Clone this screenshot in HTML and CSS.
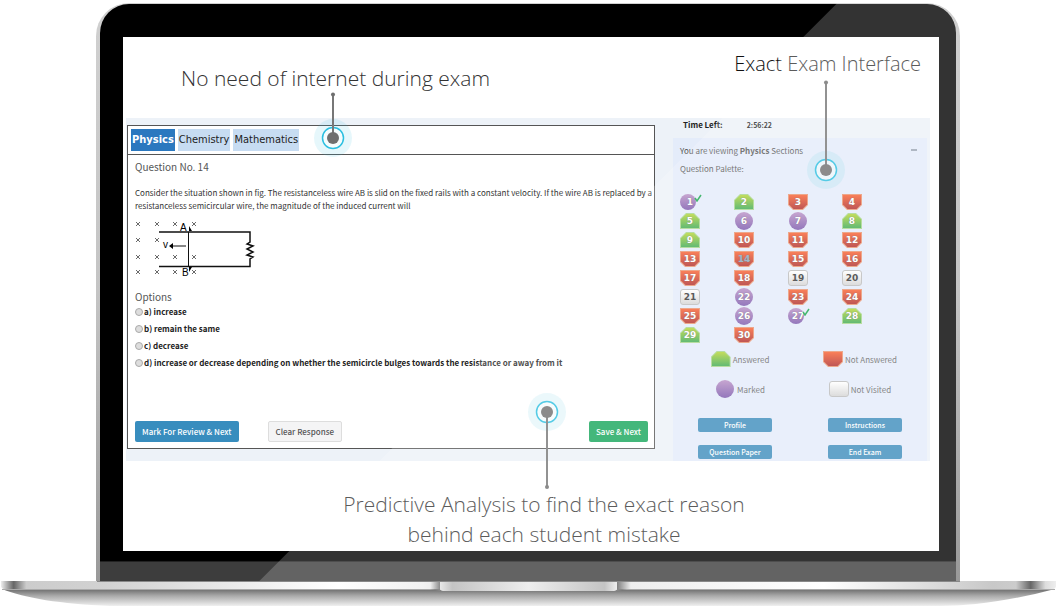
FILE: index.html
```html
<!DOCTYPE html>
<html lang="en">
<head>
<meta charset="utf-8">
<title>Exam Interface</title>
<meta name="viewport" content="width=device-width, initial-scale=1">
<link rel="stylesheet" href="styles.css">
</head>
<body>
<main class="laptop">
  <div class="lid">
    <div class="bezel">
      <div class="screen">
        <header class="captions">
          <h2 class="caption caption-left">No need of internet during exam
            <svg class="pin pin-left" width="38" height="66" viewBox="0 0 38 66" aria-hidden="true">
              <circle class="halo" cx="19" cy="46" r="19"/><circle class="ring" cx="19" cy="46" r="10.5"/>
              <path class="stem" d="M19 3V46"/><circle class="dot" cx="19" cy="2.5" r="2"/><circle class="dot" cx="19" cy="46" r="6"/>
            </svg>
          </h2>
          <h2 class="caption caption-right"><span class="strong">Exact</span> Exam Interface
            <svg class="pin pin-right" width="38" height="110" viewBox="0 0 38 110" aria-hidden="true">
              <circle class="halo" cx="19" cy="90" r="19"/><circle class="ring" cx="19" cy="90" r="10.5"/>
              <path class="stem" d="M19 3V90"/><circle class="dot" cx="19" cy="2.5" r="2"/><circle class="dot" cx="19" cy="90" r="6"/>
            </svg>
          </h2>
        </header>

        <div class="app">
          <section class="paper">
            <nav class="tabs">
              <button class="tab active" type="button">Physics</button>
              <button class="tab" type="button">Chemistry</button>
              <button class="tab" type="button">Mathematics</button>
            </nav>
            <div class="question">
              <h3 class="title">Question No. 14</h3>
              <p class="text">Consider the situation shown in fig. The resistanceless wire AB is slid on the fixed rails with a constant velocity. If the wire AB is replaced by a resistanceless semicircular wire, the magnitude of the induced current will</p>
              <svg class="figure" width="122" height="60" viewBox="0 0 122 60" role="img" aria-label="Wire AB sliding on rails">
                <path class="field" d="M1 3l4 4m0-4l-4 4M20 3l4 4m0-4l-4 4M38 3l4 4m0-4l-4 4M57 3l4 4m0-4l-4 4M1 19l4 4m0-4l-4 4M20 19l4 4m0-4l-4 4M1 36l4 4m0-4l-4 4M20 36l4 4m0-4l-4 4M38 36l4 4m0-4l-4 4M57 36l4 4m0-4l-4 4M1 51l4 4m0-4l-4 4M20 51l4 4m0-4l-4 4M38 51l4 4m0-4l-4 4M57 51l4 4m0-4l-4 4"/>
                <path class="rail" d="M24 13H115V23l-3 2 6 2-6 3 6 3-6 3 6 2-3 2V47.500H24"/>
                <path class="wire" d="M53.500 13V48"/>
                <path class="arrow" d="M36 27H51"/>
                <path d="M34 27l4-3v6zM54 7l3 5h-3zM54 48h3l-3 5z"/>
                <text x="45" y="12">A</text><text x="28" y="29">v</text><text x="47" y="57">B</text>
              </svg>
              <fieldset class="options">
                <legend class="title">Options</legend>
                <label><input type="radio" name="answer">a) increase</label>
                <label><input type="radio" name="answer">b) remain the same</label>
                <label><input type="radio" name="answer">c) decrease</label>
                <label><input type="radio" name="answer">d) increase or decrease depending on whether the semicircle bulges towards the resistance or away from it</label>
              </fieldset>
              <div class="actions">
                <button class="btn review" type="button">Mark For Review &amp; Next</button>
                <button class="btn clear" type="button">Clear Response</button>
                <button class="btn save" type="button">Save &amp; Next</button>
              </div>
            </div>
          </section>

          <aside class="side">
            <div class="timer"><b>Time Left:</b><b class="clock">2:56:22</b></div>
            <section class="panel">
              <div class="viewing"><span>You are viewing <b>Physics</b> Sections</span><button class="collapse" type="button" aria-label="Collapse"></button></div>
              <p class="palette-title">Question Palette:</p>
              <div class="palette">
                <button class="q marked ticked" type="button"><span>1</span><svg class="tick" width="8" height="8" viewBox="0 0 8 8" aria-hidden="true"><path d="M1 4l2 3L7 1"/></svg></button>
                <button class="q answered" type="button"><span>2</span></button>
                <button class="q missed" type="button"><span>3</span></button>
                <button class="q missed" type="button"><span>4</span></button>
                <button class="q answered" type="button"><span>5</span></button>
                <button class="q marked" type="button"><span>6</span></button>
                <button class="q marked" type="button"><span>7</span></button>
                <button class="q answered" type="button"><span>8</span></button>
                <button class="q answered" type="button"><span>9</span></button>
                <button class="q missed" type="button"><span>10</span></button>
                <button class="q missed" type="button"><span>11</span></button>
                <button class="q missed" type="button"><span>12</span></button>
                <button class="q missed" type="button"><span>13</span></button>
                <button class="q missed current" type="button"><span>14</span></button>
                <button class="q missed" type="button"><span>15</span></button>
                <button class="q missed" type="button"><span>16</span></button>
                <button class="q missed" type="button"><span>17</span></button>
                <button class="q missed" type="button"><span>18</span></button>
                <button class="q fresh" type="button"><span>19</span></button>
                <button class="q fresh" type="button"><span>20</span></button>
                <button class="q fresh" type="button"><span>21</span></button>
                <button class="q marked" type="button"><span>22</span></button>
                <button class="q missed" type="button"><span>23</span></button>
                <button class="q missed" type="button"><span>24</span></button>
                <button class="q missed" type="button"><span>25</span></button>
                <button class="q marked" type="button"><span>26</span></button>
                <button class="q marked ticked" type="button"><span>27</span><svg class="tick" width="8" height="8" viewBox="0 0 8 8" aria-hidden="true"><path d="M1 4l2 3L7 1"/></svg></button>
                <button class="q answered" type="button"><span>28</span></button>
                <button class="q answered" type="button"><span>29</span></button>
                <button class="q missed" type="button"><span>30</span></button>
              </div>
              <div class="legend">
                <div class="key"><i class="q answered"></i>Answered</div>
                <div class="key"><i class="q missed"></i>Not Answered</div>
                <div class="key"><i class="q marked"></i>Marked</div>
                <div class="key"><i class="q fresh"></i>Not Visited</div>
              </div>
              <div class="links">
                <button class="link" type="button">Profile</button>
                <button class="link" type="button">Instructions</button>
                <button class="link" type="button">Question Paper</button>
                <button class="link" type="button">End Exam</button>
              </div>
            </section>
          </aside>
        </div>

        <footer class="bottom">
          <h2 class="caption">Predictive Analysis to find the exact reason<br>behind each student mistake
            <svg class="pin pin-bottom" width="38" height="98" viewBox="0 0 38 98" aria-hidden="true">
              <circle class="halo" cx="19" cy="20" r="19"/><circle class="ring" cx="19" cy="20" r="10.5"/>
              <path class="stem" d="M19 20V95"/><circle class="dot" cx="19" cy="95" r="2"/><circle class="dot" cx="19" cy="20" r="6"/>
            </svg>
          </h2>
        </footer>
      </div>
      <div class="chin"></div>
    </div>
  </div>
  <svg class="base" viewBox="0 0 1057 26" preserveAspectRatio="none" aria-hidden="true">
    <defs>
      <linearGradient id="deck"><stop offset="0" stop-color="#eee"/><stop offset=".012" stop-color="#666"/><stop offset=".024" stop-color="#ccc"/><stop offset=".1" stop-color="#d2d2d2"/><stop offset=".32" stop-color="#fff"/><stop offset=".4" stop-color="#f2f2f2"/><stop offset=".407" stop-color="#eee"/><stop offset=".418" stop-color="#777"/><stop offset=".583" stop-color="#777"/><stop offset=".597" stop-color="#eee"/><stop offset=".78" stop-color="#fff"/><stop offset=".94" stop-color="#c8c8c8"/><stop offset=".962" stop-color="#ccc"/><stop offset=".976" stop-color="#666"/><stop offset=".99" stop-color="#ddd"/><stop offset="1" stop-color="#eee"/></linearGradient>
      <linearGradient id="under" x2="0" y2="1"><stop offset="0" stop-color="#6b6b6b"/><stop offset=".4" stop-color="#aaa"/><stop offset="1" stop-color="#f0f0f0"/></linearGradient>
      <linearGradient id="notch"><stop offset="0" stop-color="#e8e8e8"/><stop offset=".07" stop-color="#c4c4c4"/><stop offset=".5" stop-color="#eee"/><stop offset=".93" stop-color="#c4c4c4"/><stop offset="1" stop-color="#eee"/></linearGradient>
    </defs>
    <path fill="url(#under)" d="M2 8H1055C1010 20 970 25 940 25H110C60 23 25 17 2 8Z"/>
    <path fill="url(#deck)" d="M1 0H1056V6L1054 8H3L1 6Z"/>
    <path fill="none" stroke="#aaa" d="M2 8.500H1055"/>
    <path fill="#888" d="M430 8H440V10ZM617 8H627L617 10Z"/>
    <path fill="url(#notch)" d="M440 0H617V8Q617 10 612 10H445Q440 10 440 8Z"/>
    <path fill="none" stroke="#888" d="M97 .5H960"/>
  </svg>
</main>
</body>
</html>
```
FILE: styles.css
```css
* { box-sizing: border-box; }
body { margin: 0; background: #fff; color: #333; font-family: "Noto Sans CJK SC", "Open Sans", sans-serif; font-size: 8px; line-height: 13px; }
button { margin: 0; padding: 0; border: 0; font: inherit; cursor: pointer; }
h2, h3, p { margin: 0; font-weight: 400; }

.laptop { padding-top: 3px; }
.lid { position: relative; margin: 0 97px 0 96px; padding: 1px 4px 0; border-radius: 33px 33px 0 0; background: linear-gradient(#d0d0d0, #c4c4c4 50%, #999); }
.lid::after { content: ""; position: absolute; inset: 0 4px 0 0; border-radius: 0 30px 0 0; background: rgba(255, 255, 255, .2); clip-path: polygon(86.2% 0, 100% 0, 100% 100%, 19% 100%); pointer-events: none; z-index: 3; }
.bezel { padding-top: 33px; border-radius: 29px 29px 0 0; overflow: hidden; background: #000; }
.screen { margin: 0 17px 0 23px; background: #fff; }
.chin { height: 20px; margin-top: 10px; background: #3d3d3d; border-top: 1px solid #222; }

.captions { display: flex; justify-content: space-between; height: 81px; padding: 12px 18px 0 58px; }
.caption { position: relative; height: 30px; font: 300 21px/30px "Open Sans", sans-serif; color: #333; white-space: nowrap; }
.caption-left { margin-top: 14px; }
.caption-right { font-size: 20px; }
.strong { color: #111; }
.pin { position: absolute; z-index: 2; left: calc(50% - 21px); pointer-events: none; }
.pin-left { top: 29px; }
.pin-right { top: 31px; }
.pin-bottom { top: -97px; left: calc(50% - 16px); }
.halo { fill: #3fc3e0; opacity: .13; }
.ring { fill: #fff; fill-opacity: .6; stroke: #2bbfe0; stroke-width: 1.5; }
.stem { stroke: #777; stroke-width: 2; fill: none; }
.dot { fill: #6e6e6e; }

.app { display: grid; grid-template-columns: minmax(0, 1fr) 257px; gap: 18px; margin: 0 9px 0 3px; background: #edf2f8; }
.paper { display: flex; flex-direction: column; margin: 7px 0 12px 1px; border: 1px solid #555; background: #fff; }
.tabs { display: flex; gap: 3px; padding: 3px; border-bottom: 1px solid #555; }
.tab { height: 22px; padding: 0 1px; background: #c7dcf2; color: #222; font: 11px/22px "DejaVu Sans Condensed", "Noto Sans", sans-serif; }
.tab.active { background: #2b78bf; color: #fff; font-weight: 700; }
.question { display: flex; flex-direction: column; flex: 1; padding: 4px 6px 6px 7px; }
.title { padding: 0; font-size: 10px; line-height: 16px; color: #555; }
.text { margin: 11px -6px 0 0; }
.figure { margin-top: 7px; }
.figure text { font: 10px "Liberation Sans", sans-serif; }
.field { fill: none; stroke: #444; stroke-width: .8; }
.wire, .arrow { fill: none; stroke: #111; }
.rail { fill: none; stroke: #111; stroke-width: 1.5; }
.options { display: flex; flex-direction: column; margin: 10px 0 0; padding: 0; border: 0; font-weight: 700; color: #222; }
.options label { display: flex; align-items: center; height: 17px; }
.options input { appearance: none; width: 8px; height: 8px; margin: 0 1px 0 0; border: 1px solid #aaa; border-radius: 50%; background: #ddd; }
.options .title { font-weight: 400; height: 14px; }
.actions { display: flex; margin-top: auto; }
.btn { height: 21px; padding: 0 7px; border-radius: 2px; color: #fff; font-weight: 500; }
.review { background: #388dbe; }
.clear { margin-left: 29px; background: #f4f4f5; border: 1px solid #ddd; color: #555; }
.save { margin-left: auto; background: #16a65b; }

.side { display: flex; flex-direction: column; padding-right: 3px; }
.timer { display: flex; height: 20px; padding-left: 10px; gap: 24px; color: #222; line-height: 14px; }
.clock { font-size: 7px; }
.panel { flex: 1; padding: 4px 7px 2px; background: #e4ecfa; color: #555; }
.viewing { display: flex; justify-content: space-between; align-items: center; height: 16px; }
.collapse { width: 6px; height: 2px; margin-right: 3px; background: #9ba5b5; }
.palette-title { margin-top: 4px; }
.palette { display: grid; grid-template-columns: repeat(4, 54px); row-gap: 3px; margin-top: 19px; }
.q { display: block; position: relative; width: 20px; height: 16px; background: none; color: #fff; font: 700 9px/16px "DejaVu Sans", sans-serif; text-align: center; text-shadow: 0 0 1px #555; isolation: isolate; }
.q::before, .q::after { content: ""; position: absolute; inset: 0; z-index: -1; }
.q::after { inset: 1px; }
.answered::before { background: #a5d58a; clip-path: polygon(30% 0, 70% 0, 100% 38%, 100% 100%, 0 100%, 0 38%); }
.answered::after { background: linear-gradient(#b4d434, #3daa51); clip-path: polygon(30% 0, 70% 0, 100% 38%, 100% 100%, 0 100%, 0 38%); }
.missed::before { background: #e9936f; clip-path: polygon(0 0, 100% 0, 100% 68%, 75% 100%, 25% 100%, 0 68%); }
.missed::after { background: linear-gradient(#f96030, #b02d2b); clip-path: polygon(0 0, 100% 0, 100% 68%, 75% 100%, 25% 100%, 0 68%); }
.marked::before { inset: -1px 1px; border-radius: 50%; background: linear-gradient(#b990c5, #7956ab); }
.marked::after { display: none; }
.ticked::before { inset: 0 4px 0 0; }
.fresh { color: #333; text-shadow: none; }
.fresh::before { border: 1px solid #bbb; border-radius: 3px; background: linear-gradient(#fff, #d4d4d4); }
.fresh::after { display: none; }
.current { color: #8da5bd; }
.tick { position: absolute; right: -2px; top: 0; fill: none; stroke: #16a54b; stroke-width: 1.5; }
.legend { display: grid; grid-template-columns: 1fr 1fr; row-gap: 14px; margin-top: 8px; }
.key { display: flex; justify-content: center; align-items: center; gap: 2px; height: 16px; color: #666; }
.links { display: grid; grid-template-columns: 74px 74px; justify-content: space-between; row-gap: 13px; margin-top: 21px; padding: 0 18px; }
.link { height: 14px; border-radius: 2px; background: #3c8dbc; color: #fff; font-size: 7px; font-weight: 500; line-height: 14px; }
.bottom { height: 90px; padding: 28px 0 0 26px; text-align: center; }
.bottom .caption { display: inline-block; height: 60px; }
.base { display: block; width: 100%; height: 26px; }
```
